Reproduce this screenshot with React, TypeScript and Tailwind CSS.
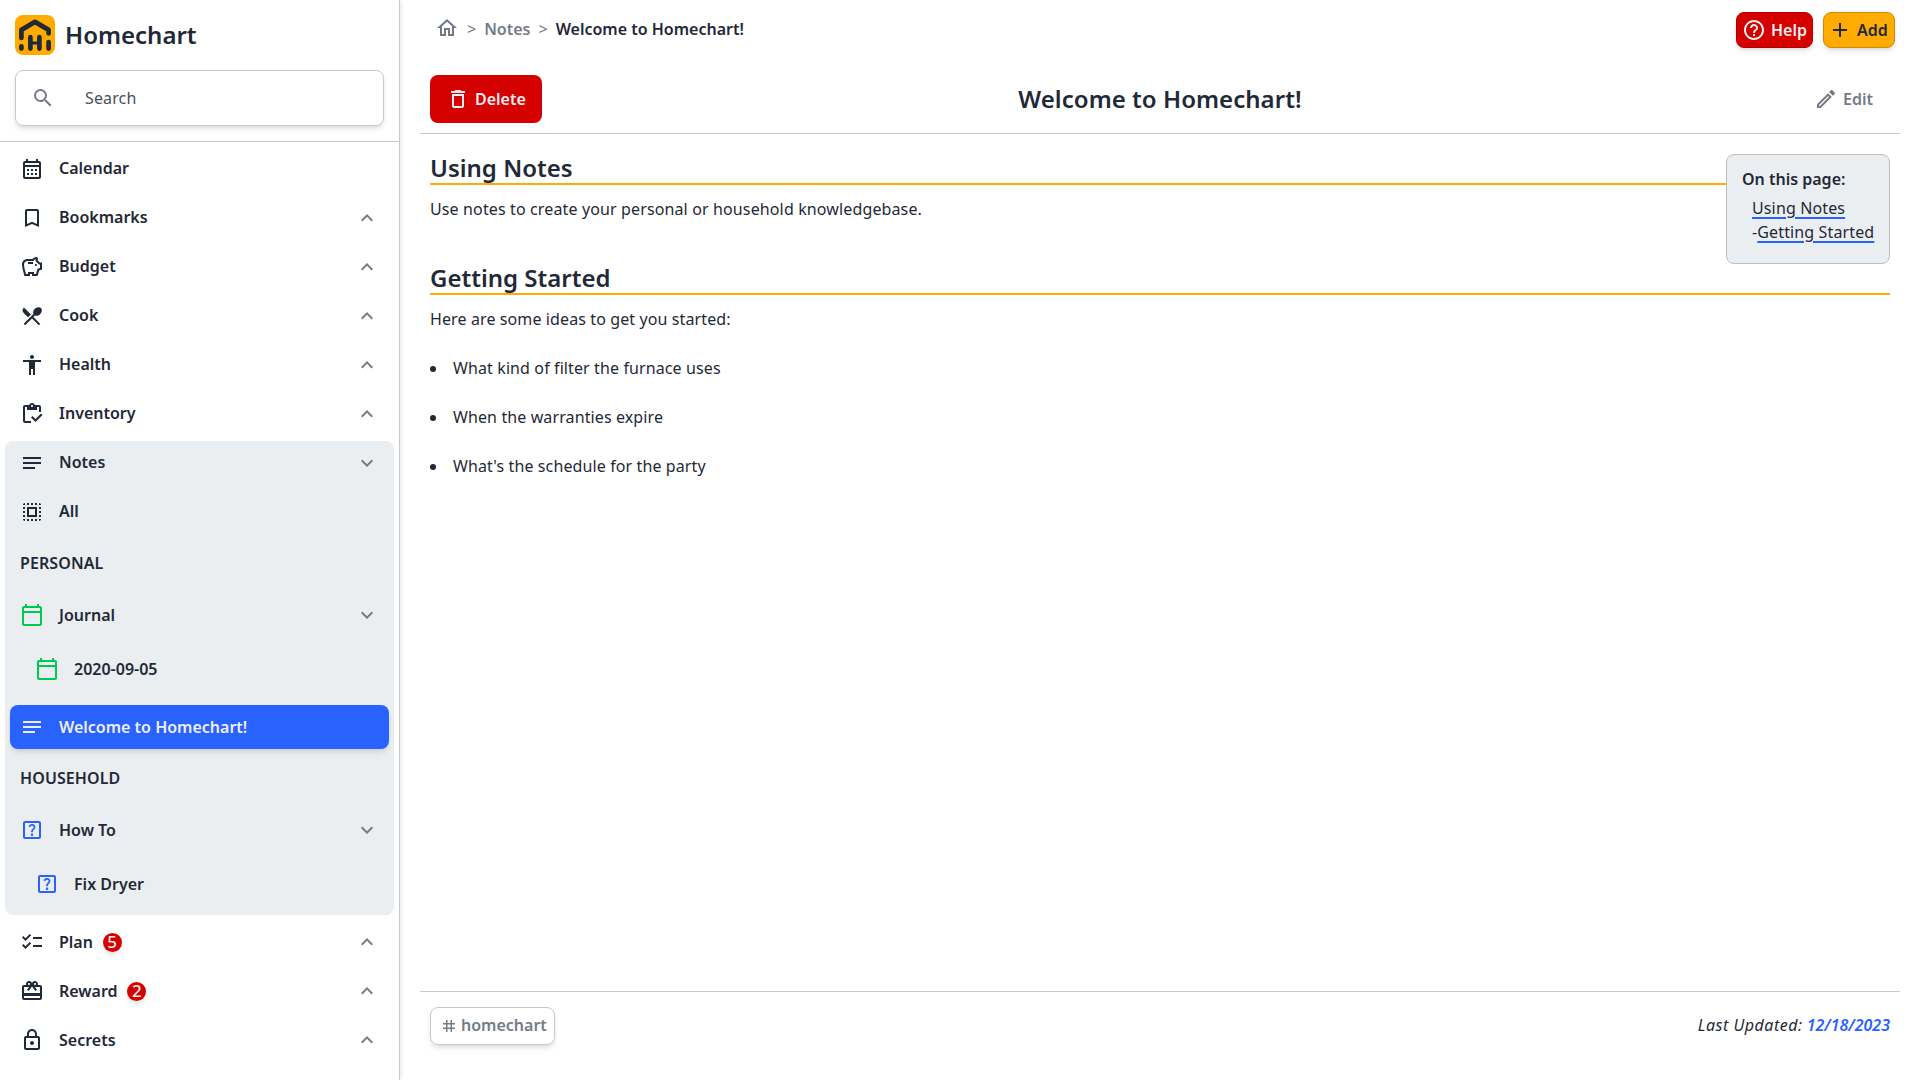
import type { ReactNode } from "react";
import type { IconType } from "react-icons";
import {
  MdAccessibility,
  MdAdd,
  MdBookmarkBorder,
  MdChecklist,
  MdDeleteOutline,
  MdExpandLess,
  MdExpandMore,
  MdHelpOutline,
  MdLocalDining,
  MdLockOutline,
  MdNotes,
  MdOutlineCalendarMonth,
  MdOutlineCalendarToday,
  MdOutlineEdit,
  MdOutlineHelpCenter,
  MdOutlineHome,
  MdOutlineInventory,
  MdOutlineSavings,
  MdRedeem,
  MdSearch,
  MdSelectAll,
  MdTag,
} from "react-icons/md";

function Logo() {
  return (
    <svg className="size-10 shrink-0" viewBox="0 0 40 40" fill="none" stroke="#1f2937" strokeWidth="4.7" strokeLinecap="round">
      <rect width="40" height="40" rx="8" fill="#ffab00" stroke="none" />
      <path d="M6.4 23V14.9L20 6.9L33.6 14.9V18.5" strokeLinejoin="round" />
      <path d="M15.4 22.2V33.6M24.4 22.2V33.6M33.6 27V33.6" />
      <path d="M16 28H24" strokeWidth="3.2" />
      <path d="M6.4 31.4V33.6" />
    </svg>
  );
}

type RowProps = {
  icon: IconType;
  label: string;
  state?: "open" | "closed";
  badge?: string;
  iconClass?: string;
  labelClass?: string;
  className?: string;
};

function Row({ icon: Icon, label, state, badge, iconClass = "", labelClass = "", className = "h-11 mb-[5px]" }: RowProps) {
  return (
    <div className={`flex shrink-0 items-center pr-[15px] pl-[15px] ${className}`}>
      <Icon className={`size-6 shrink-0 ${iconClass}`} />
      <span className={`ml-[15px] font-semibold ${labelClass}`}>{label}</span>
      {badge && (
        <span className="ml-[9.8px] flex size-[19px] items-center justify-center rounded-full bg-[#d50000] text-[17px] font-medium text-[#eceff1] shadow-md">
          {badge}
        </span>
      )}
      {state === "closed" && <MdExpandLess className="ml-auto size-6 text-[#737c86]" />}
      {state === "open" && <MdExpandMore className="ml-auto size-6 text-[#737c86]" />}
    </div>
  );
}

function Section({ children, className }: { children: ReactNode; className: string }) {
  return <div className={`flex shrink-0 items-center pl-[15px] font-semibold tracking-[0.1px] ${className}`}>{children}</div>;
}

function Sidebar() {
  return (
    <aside className="z-10 flex h-full w-[400px] shrink-0 flex-col overflow-hidden border-r border-[#c8c8c8] bg-white shadow-[1px_0_4px_rgba(0,0,0,0.1)]">
      <div className="flex h-[142px] shrink-0 flex-col border-b border-[#c8c8c8] px-[15px] pt-[15px]">
        <div className="flex h-10 items-center">
          <Logo />
          <span className="ml-[10px] text-2xl font-semibold">Homechart</span>
        </div>
        <div className="mt-[15px] flex h-14 items-center rounded-lg border border-[#c8c8c8] pl-[15px] shadow-md">
          <MdSearch className="size-6 text-[#737c86]" />
          <span className="ml-[30px] tracking-[0.13px] text-[#4a5058]">Search</span>
        </div>
      </div>
      <nav className="flex flex-col px-[5px] pt-[5px]">
        <Row icon={MdOutlineCalendarMonth} label="Calendar" labelClass="-mt-0.5" />
        <Row icon={MdBookmarkBorder} label="Bookmarks" state="closed" labelClass="-mt-0.5" />
        <Row icon={MdOutlineSavings} label="Budget" state="closed" labelClass="-mt-0.5" />
        <Row icon={MdLocalDining} label="Cook" state="closed" labelClass="-mt-0.5" />
        <Row icon={MdAccessibility} label="Health" state="closed" labelClass="-mt-0.5" />
        <Row icon={MdOutlineInventory} label="Inventory" state="closed" labelClass="-mt-0.5" />
        <div className="mb-[5px] flex h-[474px] shrink-0 flex-col rounded-lg bg-[#eaeef1]">
          <Row icon={MdNotes} label="Notes" state="open" labelClass="-mt-0.5" />
          <Row icon={MdSelectAll} label="All" labelClass="-mt-0.5" />
          <Section className="h-12">PERSONAL</Section>
          <Row icon={MdOutlineCalendarToday} label="Journal" state="open" iconClass="text-[#00c853]" className="mt-[6px] h-11" />
          <Row icon={MdOutlineCalendarToday} label="2020-09-05" iconClass="text-[#00c853]" className="mt-[10px] ml-[15px] h-11" />
          <div className="mx-[5px] mt-[14px] flex h-11 shrink-0 items-center rounded-lg bg-[#2962ff] pl-[10px] text-[#eceff1] shadow-md">
            <MdNotes className="size-6" />
            <span className="ml-[15px] font-semibold">Welcome to Homechart!</span>
          </div>
          <Section className="h-[59px] pb-0.5">HOUSEHOLD</Section>
          <Row icon={MdOutlineHelpCenter} label="How To" state="open" iconClass="text-[#2962ff]" className="h-11" />
          <Row icon={MdOutlineHelpCenter} label="Fix Dryer" iconClass="text-[#2962ff]" className="mt-[10px] ml-[15px] h-11" />
        </div>
        <Row icon={MdChecklist} label="Plan" state="closed" badge="5" />
        <Row icon={MdRedeem} label="Reward" state="closed" badge="2" />
        <Row icon={MdLockOutline} label="Secrets" state="closed" />
      </nav>
    </aside>
  );
}

function TopBar() {
  return (
    <div className="flex h-[60px] shrink-0 items-center pr-[5px] pl-[15px]">
      <div className="flex items-center pb-0.5">
        <MdOutlineHome className="mb-0.5 size-6 text-[#737c86]" />
        <span className="ml-2 text-[#737c86]">&gt;</span>
        <span className="ml-2 font-semibold text-[#737c86]">Notes</span>
        <span className="ml-2 text-[#737c86]">&gt;</span>
        <span className="ml-2 font-semibold">Welcome to Homechart!</span>
      </div>
      <div className="ml-auto flex gap-[10px] font-semibold">
        <button className="flex h-9 w-[77px] items-center rounded-lg border border-[#b00000] bg-[#d50000] pl-[5px] text-[#eceff1] shadow-md">
          <MdHelpOutline className="size-6 shrink-0" />
          <span className="ml-[5px]">Help</span>
        </button>
        <button className="flex h-9 w-[72px] items-center rounded-lg border border-[#cc8b0a] bg-[#ffab00] pl-1 shadow-md">
          <MdAdd className="size-6 shrink-0" />
          <span className="ml-[5px]">Add</span>
        </button>
      </div>
    </div>
  );
}

function Heading({ children }: { children: ReactNode }) {
  return <h2 className="h-[35px] border-b-2 border-[#ffab00] text-2xl leading-[35px] font-semibold">{children}</h2>;
}

function Contents() {
  return (
    <div className="absolute top-[20px] right-[10px] h-[110px] w-[164px] rounded-lg border border-[#bcbfc1] bg-[#eaeef1] px-[15px] pt-[12px]">
      <div className="leading-6 font-semibold">On this page:</div>
      <div className="mt-[5px] pl-[10px] leading-6 tracking-[0.13px]">
        <div>
          <span className="underline decoration-[#2962ff] decoration-2 underline-offset-[3px]">Using Notes</span>
        </div>
        <div className="whitespace-nowrap">
          -<span className="underline decoration-[#2962ff] decoration-2 underline-offset-[3px]">Getting Started</span>
        </div>
      </div>
    </div>
  );
}

export default function App() {
  return (
    <div className="flex h-[1080px] w-[1920px] overflow-hidden bg-white font-['Noto_Sans',sans-serif] text-base text-[#1f2937]">
      <Sidebar />
      <main className="flex flex-1 flex-col pr-5 pl-5">
        <TopBar />
        <div className="grid h-[74px] shrink-0 grid-cols-[1fr_auto_1fr] items-center border-b border-[#c8c8c8] px-[10px] pt-[5px]">
          <button className="mb-2.5 flex h-12 w-[112px] items-center self-end rounded-lg bg-[#d50000] pl-4 font-semibold text-[#eceff1]">
            <MdDeleteOutline className="size-6" />
            <span className="ml-[5px]">Delete</span>
          </button>
          <h1 className="text-2xl font-semibold tracking-[0.04px]">Welcome to Homechart!</h1>
          <button className="flex items-center justify-self-end pr-[17px] font-semibold text-[#737c86]">
            <MdOutlineEdit className="size-6" />
            <span className="ml-[5px]">Edit</span>
          </button>
        </div>
        <article className="relative flex-1 px-[10px] pt-[16px]">
          <Heading>Using Notes</Heading>
          <p className="mt-[12px] leading-6 tracking-[0.13px]">Use notes to create your personal or household knowledgebase.</p>
          <div className="mt-[39px]">
            <Heading>Getting Started</Heading>
          </div>
          <p className="mt-[12px] leading-6 tracking-[0.11px]">Here are some ideas to get you started:</p>
          <ul className="mt-[25px] flex list-inside list-disc flex-col gap-[25px] leading-6 tracking-[0.11px]">
            <li>What kind of filter the furnace uses</li>
            <li>When the warranties expire</li>
            <li>What's the schedule for the party</li>
          </ul>
          <Contents />
        </article>
        <footer className="flex h-[89px] shrink-0 items-start justify-between border-t border-[#c8c8c8] px-[10px] pt-[15px]">
          <div className="flex h-[38px] w-[125px] items-center rounded-lg border border-[#c8c8c8] pl-[9px] font-semibold text-[#737c86] shadow-md">
            <MdTag className="size-[18px]" />
            <span className="-mt-0.5 ml-[3px]">homechart</span>
          </div>
          <div className="mt-[6px] leading-6 italic">
            <span className="tracking-[0.5px]">Last Updated:</span>{" "}
            <span className="font-semibold text-[#2962ff]">12/18/2023</span>
          </div>
        </footer>
      </main>
    </div>
  );
}
